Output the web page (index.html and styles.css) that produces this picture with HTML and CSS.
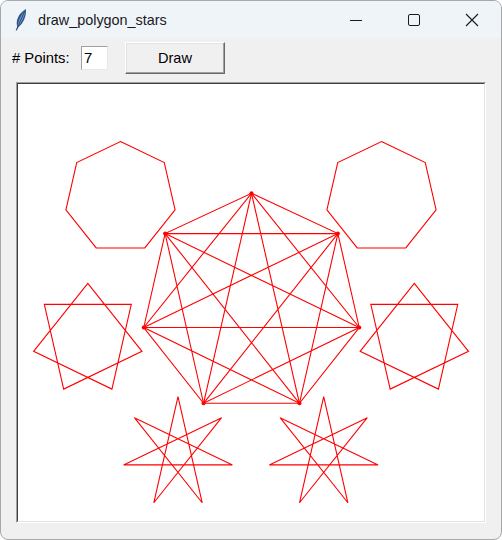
FILE: index.html
```html
<!DOCTYPE html>
<html>
<head>
<meta charset="utf-8">
<link rel="stylesheet" href="styles.css">
</head>
<body>
<div class="window">
  <div class="titlebar">
    <svg class="app-icon" width="14" height="24" viewBox="0 0 14 24">
      <path d="M2 23 L3.2 18.5 C1.5 13 4.5 5 12 1 C12.5 8 9.5 15.5 4.5 19 Z" fill="#2f5487"/>
      <path d="M3.4 18.2 C4.5 12 7.5 6 11.5 2 C10.5 8 8 14 4.2 18.6 Z" fill="#6f9bd1"/>
      <path d="M2.2 22.5 L10.8 3" stroke="#1d3150" stroke-width="0.8"/>
    </svg>
    <span class="title">draw_polygon_stars</span>
    <div class="controls">
      <div class="ctl">
        <svg width="14" height="14" viewBox="0 0 14 14"><path d="M1 7.5 H13" stroke="#1a1a1a" stroke-width="1"/></svg>
      </div>
      <div class="ctl">
        <svg width="14" height="14" viewBox="0 0 14 14"><rect x="1.5" y="1.5" width="11" height="11" rx="1.5" fill="none" stroke="#1a1a1a" stroke-width="1"/></svg>
      </div>
      <div class="ctl">
        <svg width="14" height="14" viewBox="0 0 14 14"><path d="M1 1 L13 13 M13 1 L1 13" stroke="#1a1a1a" stroke-width="1.1"/></svg>
      </div>
    </div>
  </div>
  <div class="toolbar">
    <span class="label"># Points:</span>
    <div class="entry">7</div>
    <div class="button">Draw</div>
  </div>
  <div class="canvas-outer">
    <div class="canvas-inner">
      <svg class="drawing" width="466" height="437" viewBox="18 84 466 437">
        <g fill="none" stroke="#ff0000" stroke-width="1.1" stroke-linejoin="miter">
          <polygon points="120.5,141.5 164.28,162.58 175.09,209.96 144.8,247.96 96.2,247.96 65.91,209.96 76.72,162.58"/>
          <polygon points="381.5,141.5 425.28,162.58 436.09,209.96 405.8,247.96 357.2,247.96 326.91,209.96 337.72,162.58"/>
          <polygon points="87.8,283.4 142,351.37 63.68,389.1 44.33,304.33 131.27,304.33 111.92,389.1 33.6,351.37"/>
          <polygon points="414.3,283.4 468.5,351.37 390.18,389.1 370.83,304.33 457.77,304.33 438.42,389.1 360.1,351.37"/>
          <polygon points="178,396.7 202.21,502.78 134.38,417.71 232.4,464.92 123.6,464.92 221.62,417.71 153.79,502.78"/>
          <polygon points="323.7,396.7 347.91,502.78 280.08,417.71 378.1,464.92 269.3,464.92 367.32,417.71 299.49,502.78"/>
          <polygon points="251.5,193.3 337.89,233.6 359.23,327.5 299.45,403.3 203.55,403.3 143.77,327.5 165.11,233.6"/>
          <polygon points="251.5,193.3 359.23,327.5 203.55,403.3 165.11,233.6 337.89,233.6 299.45,403.3 143.77,327.5"/>
          <polygon points="251.5,193.3 299.45,403.3 165.11,233.6 359.23,327.5 143.77,327.5 337.89,233.6 203.55,403.3"/>
        </g>
        <g fill="#ff0000">
          <circle cx="251.5" cy="193.3" r="2"/>
          <circle cx="337.89" cy="233.6" r="2"/>
          <circle cx="359.23" cy="327.5" r="2"/>
          <circle cx="299.45" cy="403.3" r="2"/>
          <circle cx="203.55" cy="403.3" r="2"/>
          <circle cx="143.77" cy="327.5" r="2"/>
          <circle cx="165.11" cy="233.6" r="2"/>
        </g>
      </svg>
    </div>
  </div>
</div>
</body>
</html>
```

FILE: styles.css
```css
html, body {
  margin: 0;
  padding: 0;
  background: #ffffff;
}

.window {
  width: 502px;
  height: 540px;
  box-sizing: border-box;
  border: 1px solid #a8a8a8;
  border-radius: 8px;
  overflow: hidden;
  background: #f0f0f0;
  font-family: "Liberation Sans", Arial, sans-serif;
  color: #000;
}

.titlebar {
  height: 37px;
  background: #eff4f9;
  display: flex;
  align-items: center;
}

.app-icon {
  margin-left: 13px;
  margin-top: 1px;
  flex: none;
}

.title {
  margin-left: 10px;
  font-size: 14.4px;
  color: #1a1a1a;
  margin-top: 1px;
}

.controls {
  margin-left: auto;
  display: flex;
  height: 100%;
}

.ctl {
  width: 58px;
  height: 100%;
  display: flex;
  align-items: center;
  justify-content: center;
}

.toolbar {
  display: flex;
  align-items: center;
  height: 32px;
  margin-top: 4px;
  padding-left: 11px;
}

.label {
  width: 59px;
  font-size: 14.8px;
  color: #000;
  white-space: nowrap;
}

.entry {
  margin-left: 10px;
  width: 27px;
  height: 24px;
  box-sizing: border-box;
  background: #fff;
  border-top: 1px solid #a0a0a0;
  border-left: 1px solid #a0a0a0;
  border-right: 1px solid #e8e8e8;
  border-bottom: 1px solid #e8e8e8;
  font-size: 15px;
  line-height: 22px;
  padding-left: 2px;
  color: #000;
}

.button {
  margin-left: 17px;
  width: 100px;
  height: 32px;
  box-sizing: border-box;
  background: #f0f0f0;
  border-top: 1px solid #ffffff;
  border-left: 1px solid #ffffff;
  border-right: 1px solid #696969;
  border-bottom: 1px solid #696969;
  box-shadow: inset -1px -1px 0 #a0a0a0, inset 1px 1px 0 #e3e3e3;
  font-size: 14.6px;
  display: flex;
  align-items: center;
  justify-content: center;
  color: #000;
}

.canvas-outer {
  margin-top: 8px;
  margin-left: 15px;
  width: 470px;
  height: 441px;
  box-sizing: border-box;
  border-top: 1px solid #a0a0a0;
  border-left: 1px solid #a0a0a0;
  border-right: 1px solid #ffffff;
  border-bottom: 1px solid #ffffff;
}

.canvas-inner {
  width: 100%;
  height: 100%;
  box-sizing: border-box;
  border-top: 1px solid #404040;
  border-left: 1px solid #404040;
  border-right: 1px solid #e3e3e3;
  border-bottom: 1px solid #e3e3e3;
  background: #ffffff;
}

.drawing {
  display: block;
}
```
